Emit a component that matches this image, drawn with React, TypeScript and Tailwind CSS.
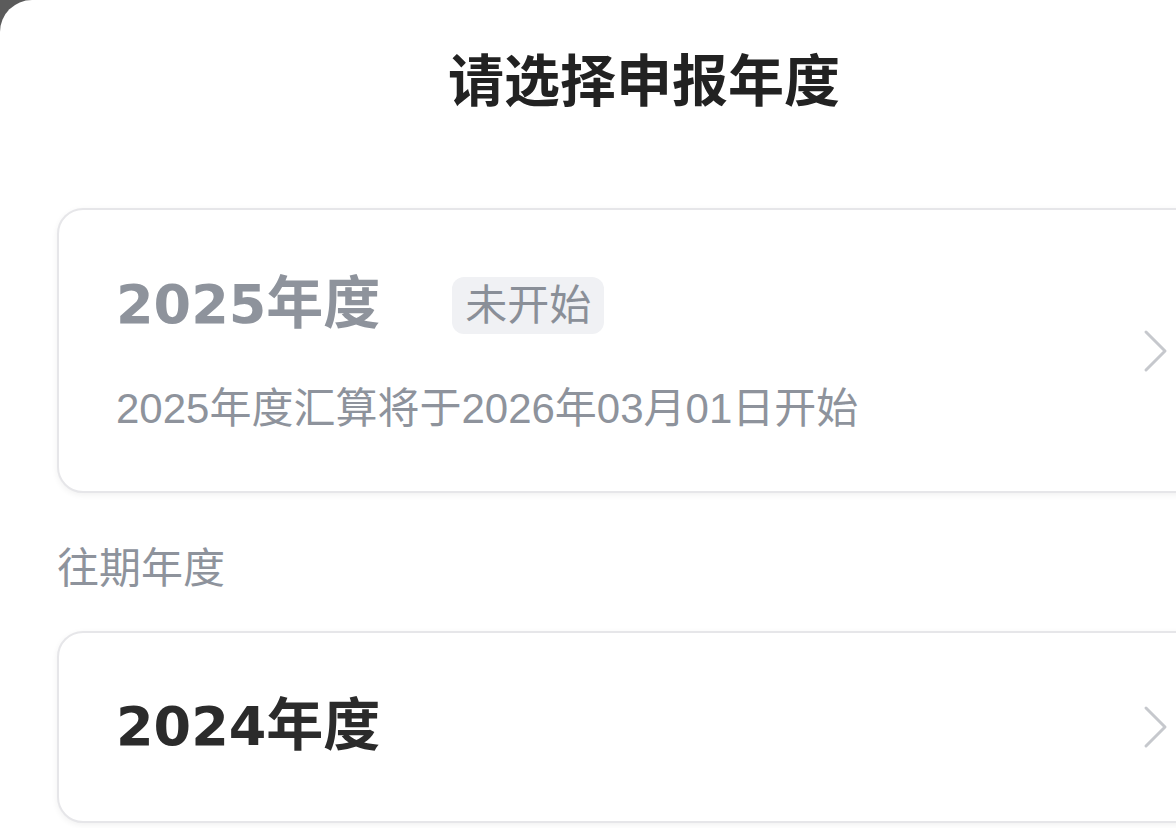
import React from "react"

function Chevron() {
  return (
    <svg width="26" height="44" viewBox="0 0 26 44" fill="none" className="shrink-0">
      <polyline
        points="3,3 22,22 3,41"
        stroke="#c6c8cd"
        strokeWidth="3"
        strokeLinecap="round"
        strokeLinejoin="round"
      />
    </svg>
  )
}

function YearTitle({ year, color }: { year: string; color: string }) {
  return (
    <span className={`relative top-[5px] leading-[64px] font-bold ${color}`}>
      <span className="text-[54px] font-['DejaVu_Sans','Noto_Sans_CJK_SC',sans-serif]">{year}</span>
      <span className="text-[57px]">年度</span>
    </span>
  )
}

export default function App() {
  const font = { fontFamily: '"Liberation Sans", "Noto Sans CJK SC", sans-serif' }

  return (
    <div className="w-[1176px] h-[828px] overflow-hidden bg-[#5b5b5b]" style={font}>
      <div className="w-[1288px] h-full bg-white rounded-tl-[32px] pt-[44px]">
        <h1 className="text-center text-[56px] leading-[76px] font-bold text-[#222222]">
          请选择申报年度
        </h1>

        <div className="px-[57px] mt-[88px]">
          <div className="h-[285px] rounded-[26px] border-2 border-[#e6e6e9] shadow-[0_2px_6px_rgba(0,0,0,0.06)] bg-white flex items-center pl-[57px] pr-[60px]">
            <div className="flex-1">
              <div className="flex items-center">
                <YearTitle year="2025" color="text-[#8e939c]" />
                <span className="ml-[72px] rounded-[12px] bg-[#f0f1f4] px-[13px] h-[57px] flex items-center text-[42px] text-[#8a8f98]">
                  未开始
                </span>
              </div>
              <p className="mt-[38px] text-[42px] leading-[52px] text-[#8e939c]">
                2025年度汇算将于2026年03月01日开始
              </p>
            </div>
            <Chevron />
          </div>

          <h2 className="mt-[50px] text-[42px] leading-[52px] text-[#8e939c]">往期年度</h2>

          <div className="mt-[36px] h-[192px] rounded-[26px] border-2 border-[#e6e6e9] shadow-[0_2px_6px_rgba(0,0,0,0.06)] bg-white flex items-center pl-[57px] pr-[60px]">
            <div className="flex-1">
              <YearTitle year="2024" color="text-[#2b2b2b]" />
            </div>
            <Chevron />
          </div>
        </div>
      </div>
    </div>
  )
}
